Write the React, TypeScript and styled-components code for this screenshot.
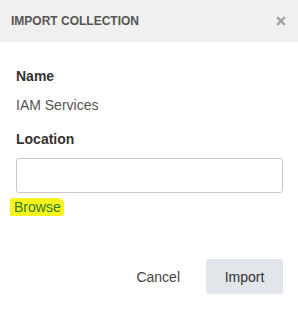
import styled, { createGlobalStyle } from "styled-components";

const Global = createGlobalStyle`
  html, body {
    margin: 0;
    padding: 0;
    background: #ffffff;
    font-family: "Liberation Sans", Arial, sans-serif;
  }
`;

export default function App() {
  return (
    <>
      <Global />
      <Dialog>
        <Header>
          <Title>IMPORT COLLECTION</Title>
          <Close aria-label="Close">
            <svg width="10" height="10" viewBox="0 0 10 10">
              <path
                d="M1.2 1.2 L8.8 8.8 M8.8 1.2 L1.2 8.8"
                stroke="#a3a3a3"
                strokeWidth="2.4"
                strokeLinecap="butt"
              />
            </svg>
          </Close>
        </Header>
        <Body>
          <Label>Name</Label>
          <Value>IAM Services</Value>
          <Label $top={14}>Location</Label>
          <Input type="text" />
          <BrowseRow>
            <Browse>Browse</Browse>
          </BrowseRow>
        </Body>
        <Footer>
          <TextButton>Cancel</TextButton>
          <PrimaryButton>Import</PrimaryButton>
        </Footer>
      </Dialog>
    </>
  );
}

const Dialog = styled.div`
  width: 298px;
  height: 310px;
  display: flex;
  flex-direction: column;
  background: #ffffff;
`;

const Header = styled.div`
  height: 42px;
  background: #f0f0f0;
  display: flex;
  align-items: center;
  justify-content: space-between;
  padding: 0 12px 0 11px;
  box-sizing: border-box;
`;

const Title = styled.div`
  font-size: 12px;
  font-weight: 700;
  color: #555555;
  line-height: 16px;
`;

const Close = styled.button`
  border: 0;
  background: transparent;
  padding: 0;
  width: 10px;
  height: 10px;
  display: flex;
  cursor: pointer;
`;

const Body = styled.div`
  display: flex;
  flex-direction: column;
  padding: 24px 15px 0 16px;
`;

const Label = styled.div<{ $top?: number }>`
  font-size: 14px;
  font-weight: 700;
  color: #333333;
  line-height: 20px;
  margin-top: ${(p) => p.$top ?? 0}px;
`;

const Value = styled.div`
  font-size: 14px;
  color: #555555;
  line-height: 20px;
  margin-top: 9px;
`;

const Input = styled.input`
  margin-top: 9px;
  height: 35px;
  width: 267px;
  box-sizing: border-box;
  border: 1px solid #c8c8c8;
  border-radius: 3px;
  padding: 0 8px;
  font-size: 14px;
  outline: none;
`;

const BrowseRow = styled.div`
  margin-top: 5px;
  margin-left: -6px;
  display: flex;
`;

const Browse = styled.a`
  display: inline-block;
  background: #f7f31c;
  color: #2f7c2a;
  font-size: 14px;
  line-height: 18px;
  padding: 0 3px 0 4px;
  border-radius: 2px 6px 3px 1px;
  cursor: pointer;
`;

const Footer = styled.div`
  margin-top: auto;
  display: flex;
  justify-content: flex-end;
  align-items: center;
  gap: 26px;
  padding: 0 15px 16px 0;
`;

const TextButton = styled.button`
  border: 0;
  background: transparent;
  font-family: inherit;
  font-size: 14px;
  color: #444444;
  padding: 0;
  cursor: pointer;
`;

const PrimaryButton = styled.button`
  width: 77px;
  height: 35px;
  border: 0;
  border-radius: 3px;
  background: #e2e5e9;
  font-family: inherit;
  font-size: 14px;
  color: #333333;
  cursor: pointer;
`;
